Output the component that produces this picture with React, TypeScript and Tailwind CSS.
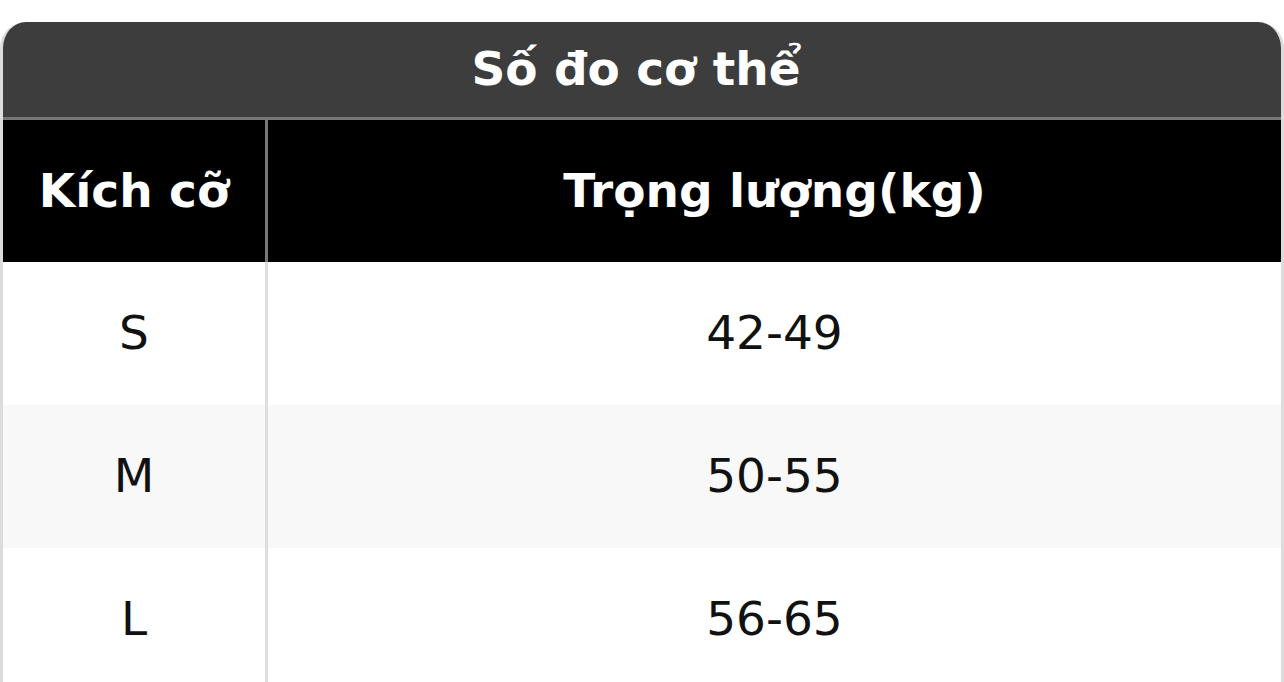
import React from 'react';

const rows = [
  { size: 'S', weight: '42-49' },
  { size: 'M', weight: '50-55' },
  { size: 'L', weight: '56-65' },
];

export default function App() {
  return (
    <div className="w-[1284px] h-[682px] overflow-hidden bg-white pt-[22px] font-['DejaVu_Sans',sans-serif]">
      <div className="rounded-t-[26px] overflow-hidden border-x-[3px] border-[#dcdcdc] bg-white">
        <div className="h-[98px] bg-[#3d3d3d] flex items-center justify-center pr-[12px] pb-[3px] border-b-[3px] border-[#777]">
          <span className="text-white font-bold text-[47px] leading-none">Số đo cơ thể</span>
        </div>
        <div className="grid grid-cols-[265px_1fr] h-[142px] bg-black text-white font-bold text-[47px]">
          <div className="flex items-center justify-center border-r-[3px] border-[#777]">Kích cỡ</div>
          <div className="flex items-center justify-center">Trọng lượng(kg)</div>
        </div>
        {rows.map((r, i) => (
          <div
            key={r.size}
            className={`grid grid-cols-[265px_1fr] h-[143px] text-[47px] text-[#111] ${i % 2 === 1 ? 'bg-[#f8f8f8]' : 'bg-white'}`}
          >
            <div className="flex items-center justify-center border-r-[3px] border-[#dedede]">{r.size}</div>
            <div className="flex items-center justify-center">{r.weight}</div>
          </div>
        ))}
      </div>
    </div>
  );
}
